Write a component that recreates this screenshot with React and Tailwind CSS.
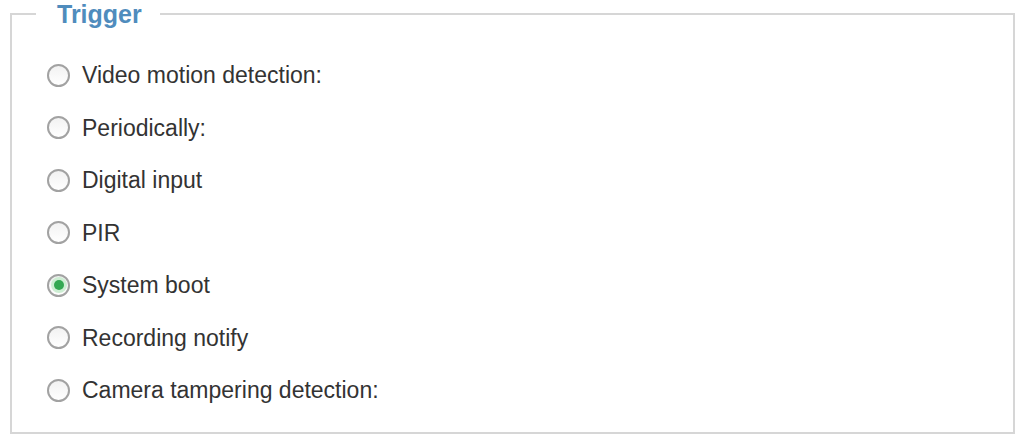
import { useState } from "react";

const TRIGGERS = [
  { id: "motion", label: "Video motion detection:" },
  { id: "periodic", label: "Periodically:" },
  { id: "di", label: "Digital input" },
  { id: "pir", label: "PIR" },
  { id: "boot", label: "System boot" },
  { id: "recording", label: "Recording notify" },
  { id: "tamper", label: "Camera tampering detection:" },
];

const RadioDot = ({ checked }) => (
  <span className="relative flex h-[23px] w-[23px] shrink-0 items-center justify-center rounded-full border-2 border-[#a2a2a2] bg-gradient-to-b from-[#f2f2f2] to-[#ffffff]">
    {checked && (
      <span className="h-[10px] w-[10px] rounded-full bg-[#34a853] shadow-[0_0_0_3px_#cdeed3]" />
    )}
  </span>
);

export default function App() {
  const [trigger, setTrigger] = useState("boot");

  return (
    <div
      className="h-[434px] w-[1017px] bg-white"
      style={{ fontFamily: '"Liberation Sans", Arial, sans-serif' }}
    >
      <fieldset className="ml-[10px] h-[434px] w-[1005px] border-2 border-[#d6d6d6] pl-[24px]">
        <legend className="pl-[21px] pr-[18px] text-[25px] font-bold leading-[28px] text-[#4f8cbd]">
          Trigger
        </legend>
        <div className="flex flex-col pt-[21px]">
          {TRIGGERS.map((t) => (
            <label
              key={t.id}
              className="flex h-[52.5px] cursor-pointer items-center gap-[12px] pl-[11px] text-[23px] text-[#333333]"
              onClick={() => setTrigger(t.id)}
            >
              <RadioDot checked={trigger === t.id} />
              <span>{t.label}</span>
            </label>
          ))}
        </div>
      </fieldset>
    </div>
  );
}
